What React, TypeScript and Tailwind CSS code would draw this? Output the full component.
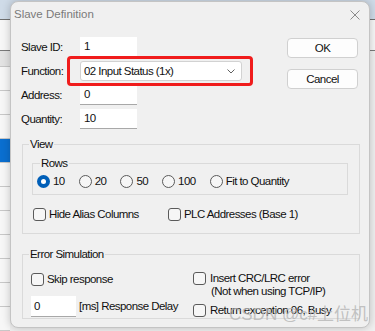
import React from "react";

function Radio({ checked, label }: { checked?: boolean; label: string }) {
  return (
    <div className="flex items-center gap-[3px]">
      {checked ? (
        <span className="w-[13px] h-[13px] rounded-full bg-[#005fb8] flex items-center justify-center">
          <span className="w-[5px] h-[5px] rounded-full bg-white" />
        </span>
      ) : (
        <span className="w-[13px] h-[13px] rounded-full border border-[#5a5a5a] bg-[#f6f6f6]" />
      )}
      <span>{label}</span>
    </div>
  );
}

function Check({ label }: { label: string }) {
  return (
    <div className="flex items-center gap-[3px] h-[14px]">
      <span className="w-[13px] h-[13px] rounded-[3px] border border-[#5a5a5a] bg-[#f6f6f6] shrink-0" />
      <span>{label}</span>
    </div>
  );
}

function Field({ label, value }: { label: string; value: string }) {
  return (
    <div className="flex items-center h-[20px]">
      <span className="w-[59px]">{label}</span>
      <div className="w-[57px] h-[20px] bg-white border-b border-[#a8a8a8] pl-[4px] flex items-center">
        {value}
      </div>
    </div>
  );
}

const rowClasses = [
  "h-[24px] bg-[#f7f7f7] border-b border-[#c8c8c8]",
  "h-[24px] bg-[#f7f7f7] border-b border-[#c8c8c8]",
  "h-[24px] bg-[#f7f7f7] border-b border-[#c8c8c8]",
  "h-[24px] bg-[#0a6fd0] border-b border-[#c8c8c8]",
  "h-[24px] bg-[#f7f7f7] border-b border-[#c8c8c8]",
  "h-[24px] bg-[#f7f7f7] border-b border-[#c8c8c8]",
  "h-[24px] bg-[#f7f7f7] border-b border-[#c8c8c8]",
  "h-[24px] bg-[#f7f7f7] border-b border-[#c8c8c8]",
  "h-[24px] bg-[#f7f7f7] border-b border-[#c8c8c8]",
  "h-[24px] bg-[#f7f7f7] border-b border-[#c8c8c8]",
  "h-[24px] bg-[#f7f7f7] border-b border-[#c8c8c8]",
];

export default function App() {
  return (
    <div className="relative w-[375px] h-[331px] overflow-hidden bg-[#f0f0f0]">
      {/* background application */}
      <div className="h-[20px] bg-[#cfdbe8] border-b border-[#6f6f6f]" />
      <div className="h-[31px] bg-[#f7f7f7] border-b border-[#7a7a7a]" />
      <div className="flex">
        <div className="w-[10px] flex flex-col">
          <div className="h-[16px] bg-[#e3e3e3] border-b border-[#c6c6c6]" />
          {rowClasses.map((c, i) => (
            <div key={i} className={c} />
          ))}
        </div>
      </div>

      {/* dialog */}
      <div className="absolute left-[10px] top-[1px] w-[360px] h-[327px] rounded-[8px] border border-[#c4c4c4] bg-[#f0f0f0] shadow-[0_0_8px_rgba(0,0,0,0.22)] flex flex-col text-[#111] text-[11.5px] tracking-[-0.55px] leading-[15px] font-['Liberation_Sans',Arial,sans-serif]">
        <div className="h-[24px] flex items-center justify-between pl-[3px] pr-[9px]">
          <span className="text-[11.5px] tracking-normal text-[#7a7a7a]">Slave Definition</span>
          <svg width="10" height="10" viewBox="0 0 10 10" className="mt-[1px]">
            <path d="M0.5 0.5 L9.5 9.5 M9.5 0.5 L0.5 9.5" stroke="#8a8a8a" strokeWidth="1" fill="none" />
          </svg>
        </div>

        <div className="mt-[11px] flex pl-[10px] pr-[11px]">
          <div className="flex flex-col gap-[4px]">
            <Field label="Slave ID:" value="1" />
            <div className="flex items-center h-[20px]">
              <span className="w-[59px]">Function:</span>
              <div className="relative w-[162px] h-[20px] bg-white border border-[#d2d2d2] rounded-[3px] pl-[3px] pr-[6px] flex items-center justify-between">
                <span>02 Input Status (1x)</span>
                <svg width="8" height="5" viewBox="0 0 8 5">
                  <path d="M0.5 0.5 L4 4 L7.5 0.5" stroke="#606060" strokeWidth="1" fill="none" />
                </svg>
                <div className="absolute -left-[14px] -right-[12px] -top-[6px] -bottom-[6px] border-[3px] border-[#f01c1c] rounded-[4px]" />
              </div>
            </div>
            <Field label="Address:" value="0" />
            <Field label="Quantity:" value="10" />
          </div>
          <div className="ml-auto flex flex-col gap-[11px] mt-[1px]">
            <div className="w-[71px] h-[20px] bg-[#fdfdfd] border border-[#d0d0d0] rounded-[4px] flex items-center justify-center">
              OK
            </div>
            <div className="w-[71px] h-[20px] bg-[#fdfdfd] border border-[#d0d0d0] rounded-[4px] flex items-center justify-center">
              Cancel
            </div>
          </div>
        </div>

        {/* View */}
        <fieldset className="mt-[8px] ml-[11px] mr-[9px] border border-[#dadada] p-0">
          <legend className="ml-[6px] px-[1px] leading-[15px]">View</legend>
          <div className="pl-[9px] pr-[11px] pb-[12px]">
            <fieldset className="mt-[4px] border border-[#dadada] p-0">
              <legend className="ml-[7px] px-[1px] leading-[15px]">Rows</legend>
              <div className="flex items-center h-[16px] mt-[2px] mb-[5px] pl-[4px] gap-[14px]">
                <Radio checked label="10" />
                <Radio label="20" />
                <Radio label="50" />
                <Radio label="100" />
                <Radio label="Fit to Quantity" />
              </div>
            </fieldset>
            <div className="flex mt-[12px] pl-[1px]">
              <div className="w-[135px]">
                <Check label="Hide Alias Columns" />
              </div>
              <Check label="PLC Addresses (Base 1)" />
            </div>
          </div>
        </fieldset>

        {/* Error Simulation */}
        <fieldset className="mt-[13px] ml-[11px] mr-[9px] border border-[#dadada] p-0">
          <legend className="ml-[6px] px-[1px] leading-[15px]">Error Simulation</legend>
          <div className="flex pl-[8px] pb-[1px]">
            <div className="w-[162px] flex flex-col">
              <div className="mt-[10px]">
                <Check label="Skip response" />
              </div>
              <div className="mt-[10px] flex items-center gap-[3px]">
                <div className="w-[45px] h-[21px] bg-white border-b border-[#a8a8a8] pl-[3px] flex items-center">
                  0
                </div>
                <span className="whitespace-nowrap">[ms] Response Delay</span>
              </div>
            </div>
            <div className="flex flex-col mt-[10px]">
              <div className="flex items-start gap-[4px]">
                <span className="w-[13px] h-[13px] rounded-[3px] border border-[#5a5a5a] bg-[#f6f6f6] shrink-0" />
                <div className="flex flex-col leading-[13px]">
                  <span>Insert CRC/LRC error</span>
                  <span className="pl-[1px]">(Not when using TCP/IP)</span>
                </div>
              </div>
              <div className="mt-[5px] flex items-center gap-[4px] h-[14px]">
                <span className="w-[13px] h-[13px] rounded-[3px] border border-[#5a5a5a] bg-[#f6f6f6] shrink-0" />
                <span>Return exception 06, Busy</span>
              </div>
            </div>
          </div>
        </fieldset>

        <div className="absolute left-[218px] top-[303px] text-[17px] tracking-normal leading-[20px] text-[#b4b4b4]/80 font-['Liberation_Sans','Noto_Sans_CJK_SC',sans-serif] whitespace-nowrap">
          CSDN @c#上位机
        </div>
      </div>
    </div>
  );
}
